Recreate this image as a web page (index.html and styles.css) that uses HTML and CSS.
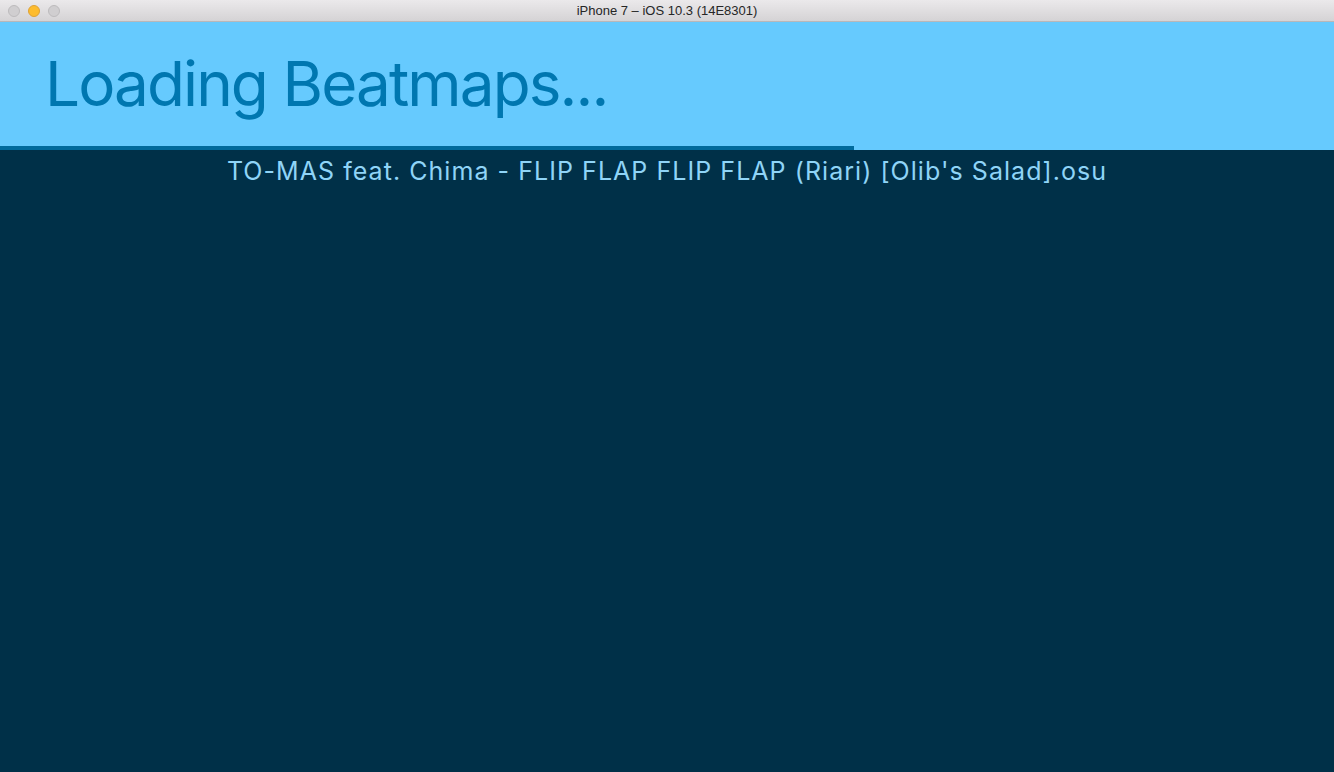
FILE: index.html
```html
<!DOCTYPE html>
<html>
<head>
<meta charset="utf-8">
<link rel="stylesheet" href="styles.css">
</head>
<body>
<div class="window">
  <div class="titlebar">
    <div class="lights">
      <span class="light gray"></span>
      <span class="light yellow"></span>
      <span class="light gray"></span>
    </div>
    <div class="wtitle">iPhone 7 – iOS 10.3 (14E8301)</div>
  </div>
  <div class="header">
    <h1 class="heading">Loading Beatmaps...</h1>
    <div class="progress"><div class="progress-fill" style="width:64%"></div></div>
  </div>
  <div class="content">
    <div class="file">TO-MAS feat. Chima - FLIP FLAP FLIP FLAP (Riari) [Olib's Salad].osu</div>
  </div>
</div>
</body>
</html>
```
FILE: styles.css
```css
html, body {
  margin: 0;
  padding: 0;
  height: 100%;
}
body {
  background: #003048;
  font-family: Inter, "Noto Sans", sans-serif;
}
.window {
  display: flex;
  flex-direction: column;
  height: 772px;
}
.titlebar {
  height: 21px;
  border-bottom: 1px solid #b9b7b9;
  background: linear-gradient(#ebe9eb, #d5d3d5);
  display: flex;
  align-items: center;
  position: relative;
}
.lights {
  display: flex;
  gap: 8px;
  padding-left: 8px;
}
.light {
  width: 12px;
  height: 12px;
  border-radius: 50%;
  box-sizing: border-box;
}
.light.gray {
  background: #d0ced0;
  border: 1px solid #bdbbbd;
}
.light.yellow {
  background: #fdbc2e;
  border: 1px solid #dea236;
}
.wtitle {
  position: absolute;
  left: 0;
  right: 0;
  top: 0;
  line-height: 22px;
  text-align: center;
  font-size: 13px;
  color: #262626;
  font-family: "Liberation Sans", Arial, sans-serif;
}
.header {
  background: #66cafe;
  height: 128px;
  display: flex;
  flex-direction: column;
  justify-content: flex-end;
}
.heading {
  margin: 0 0 0 45px;
  font-weight: 400;
  font-size: 62px;
  line-height: 1;
  color: #0077b0;
  letter-spacing: -1.9px;
  padding-bottom: 31px;
}
.progress {
  height: 4px;
  background: transparent;
}
.progress-fill {
  height: 100%;
  background: #006a9c;
}
.content {
  flex: 1;
  background: #003048;
}
.file {
  text-align: center;
  color: #8fd4f7;
  font-size: 25px;
  line-height: 1;
  letter-spacing: 1.05px;
  padding-top: 9px;
}
```
